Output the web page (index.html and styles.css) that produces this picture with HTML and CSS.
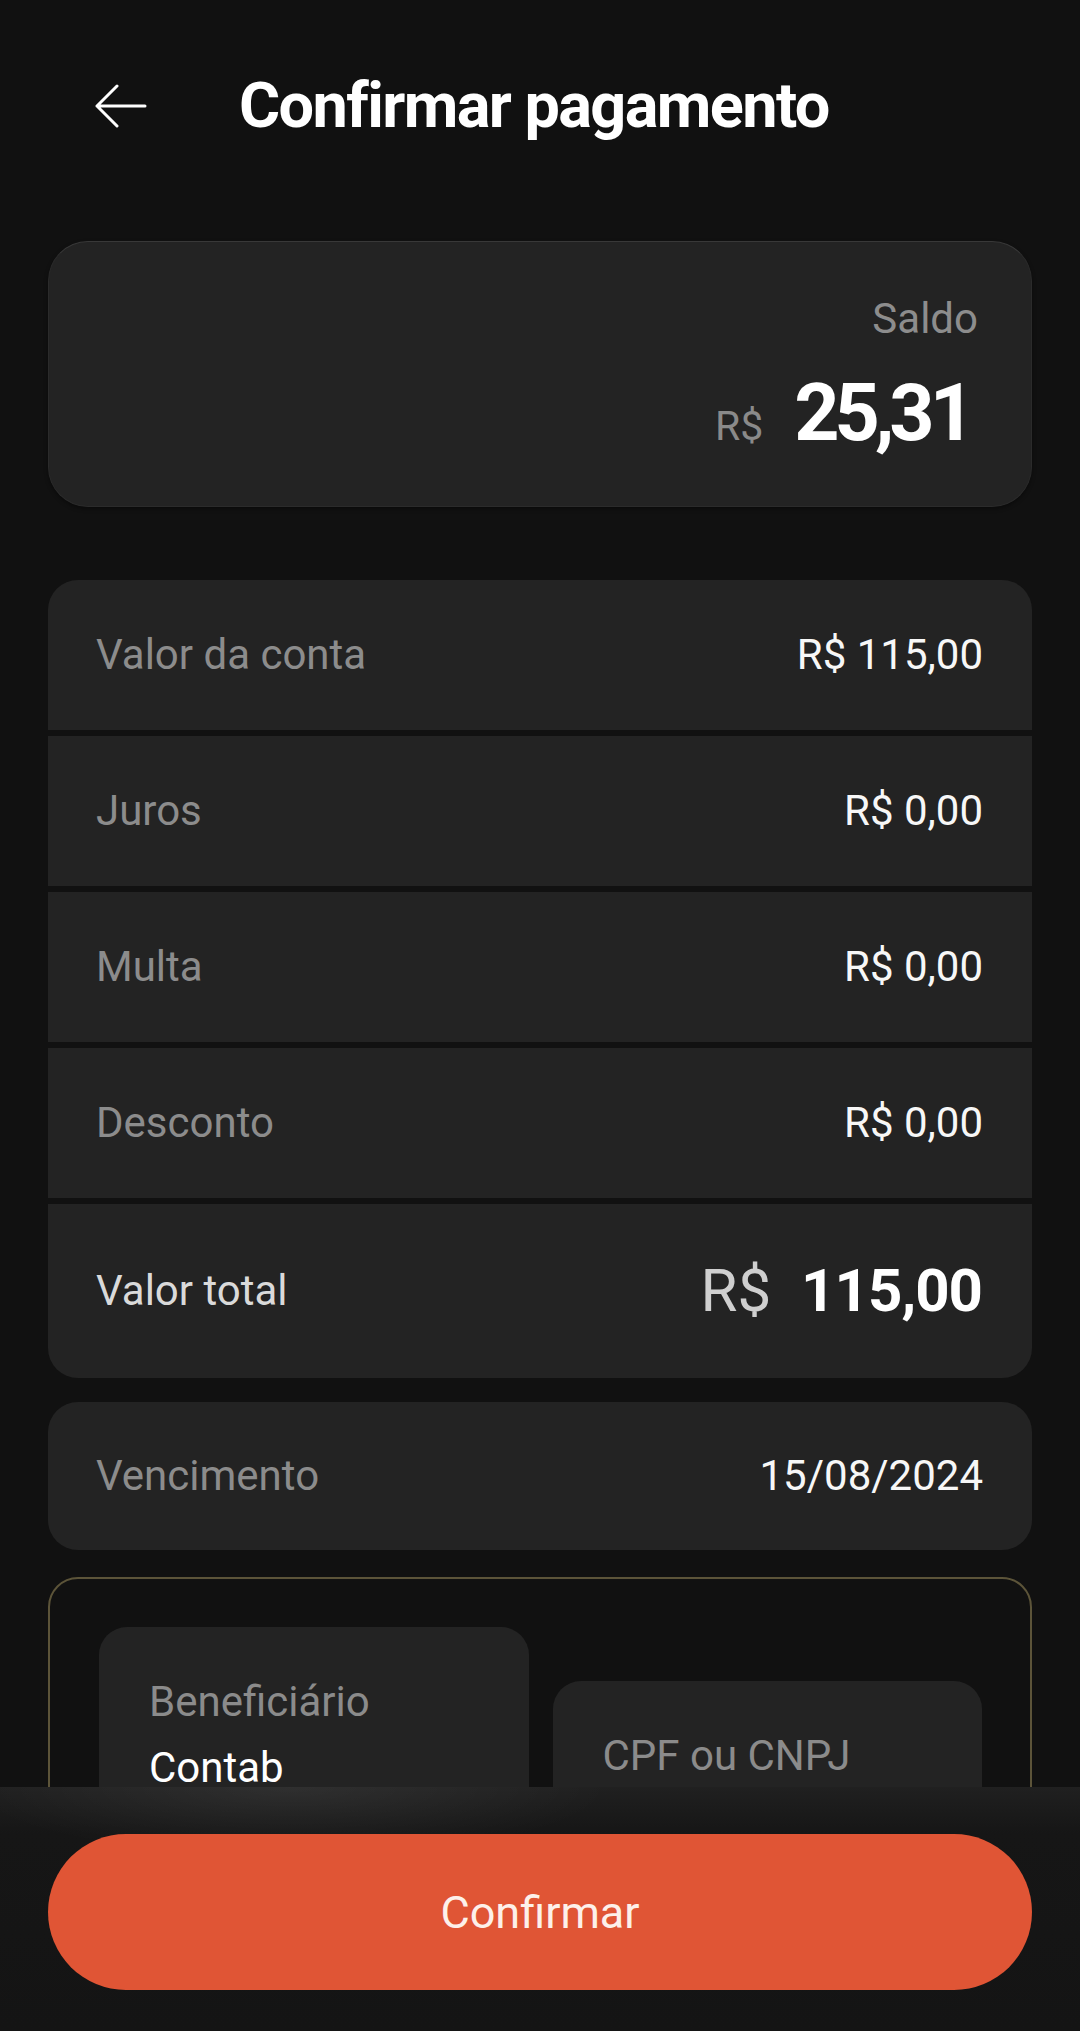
FILE: index.html
```html
<!DOCTYPE html>
<html lang="pt-BR">
<head>
    <meta charset="UTF-8">
    <meta name="viewport" content="width=device-width, initial-scale=1.0">
    <title>Confirmar pagamento</title>
    <link rel="stylesheet" href="styles.css">
</head>
<body>
    <header class="top-bar">
        <button class="back-button" aria-label="Voltar">
            <svg width="52" height="44" viewBox="0 0 52 44" fill="none" stroke="#ffffff" stroke-width="3" stroke-linecap="round" stroke-linejoin="round">
                <path d="M2 22H50M22 2L2 22l20 20"/>
            </svg>
        </button>
        <h1>Confirmar pagamento</h1>
    </header>

    <main class="content">
        <section class="balance-card">
            <div class="balance-label">Saldo</div>
            <div class="balance-amount">
                <span class="currency">R$</span>
                <span class="amount">25,31</span>
            </div>
        </section>

        <section class="summary">
            <div class="summary-row">
                <span class="row-label">Valor da conta</span>
                <span class="row-value">R$ 115,00</span>
            </div>
            <div class="summary-row">
                <span class="row-label">Juros</span>
                <span class="row-value">R$ 0,00</span>
            </div>
            <div class="summary-row">
                <span class="row-label">Multa</span>
                <span class="row-value">R$ 0,00</span>
            </div>
            <div class="summary-row">
                <span class="row-label">Desconto</span>
                <span class="row-value">R$ 0,00</span>
            </div>
            <div class="summary-row total-row">
                <span class="total-label">Valor total</span>
                <span class="total-value">
                    <span class="total-currency">R$</span>
                    <span class="total-amount">115,00</span>
                </span>
            </div>
        </section>

        <section class="due-card">
            <span class="row-label">Vencimento</span>
            <span class="row-value">15/08/2024</span>
        </section>

        <!-- the rest of this box sits under the action bar -->
        <section class="payee-box">
            <div class="info-card">
                <div class="info-label">Beneficiário</div>
                <div class="info-value">Contab</div>
            </div>
            <div class="info-card info-card-short">
                <div class="info-label">CPF ou CNPJ</div>
            </div>
        </section>
    </main>

    <footer class="action-bar">
        <button class="confirm-button">Confirmar</button>
    </footer>
</body>
</html>
```

FILE: styles.css
```css
html, body {
    height: 100%;
}
body {
    margin: 0;
    display: flex;
    flex-direction: column;
    background: #111111;
    color: #ffffff;
    font-family: Roboto, "Liberation Sans", Arial, sans-serif;
    overflow: hidden;
}
.top-bar {
    flex-shrink: 0;
    height: 212px;
    display: flex;
    align-items: center;
    padding-left: 95px;
    box-sizing: border-box;
}
.back-button {
    padding: 0;
    border: none;
    background: none;
    display: flex;
    cursor: pointer;
}
.top-bar h1 {
    margin: 0 0 0 92px;
    font-size: 63px;
    font-weight: 700;
    line-height: 76px;
    letter-spacing: -1.6px;
}
.content {
    flex: 1;
    min-height: 0;
    overflow: hidden;
    padding: 29px 48px 0;
}
.balance-card {
    padding: 52px 53px 45px;
    border: 1px solid #2b2b2b;
    border-top-color: #383838;
    border-radius: 40px;
    background: #232323;
    text-align: right;
    box-shadow: 0 2px 4px rgba(0, 0, 0, 0.4);
}
.balance-label {
    font-size: 42px;
    line-height: 50px;
    color: #8d8d8d;
}
.balance-amount {
    margin-top: 22px;
    display: flex;
    justify-content: flex-end;
    align-items: baseline;
    gap: 31px;
}
.currency {
    font-size: 41px;
    line-height: 49px;
    color: #8a8a8a;
}
.amount {
    font-size: 79px;
    font-weight: 700;
    line-height: 95px;
    letter-spacing: -5px;
    margin-right: 8px;
}
.summary {
    margin-top: 73px;
    display: flex;
    flex-direction: column;
    gap: 6px;
    border-radius: 30px;
    overflow: hidden;
}
.summary-row,
.due-card {
    height: 150px;
    padding: 0 49px 0 48px;
    display: flex;
    justify-content: space-between;
    align-items: center;
    background: #232323;
    font-size: 42px;
    line-height: 50px;
}
.row-label {
    color: #8c8c8c;
}
.row-value {
    color: #f7f7f7;
}
.total-row {
    height: 174px;
}
.total-label {
    color: #dadada;
}
.total-value {
    display: flex;
    align-items: baseline;
    gap: 30px;
}
.total-currency {
    font-size: 60px;
    line-height: 70px;
    color: #cfcfcf;
}
.total-amount {
    font-size: 60px;
    font-weight: 700;
    line-height: 70px;
    letter-spacing: -1px;
    margin-right: 1px;
}
.due-card {
    margin-top: 24px;
    height: 148px;
    border-radius: 30px;
}
.payee-box {
    margin-top: 27px;
    padding: 48px 48px 48px 49px;
    border: 2px solid #5c5439;
    border-radius: 30px;
    display: flex;
    align-items: flex-start;
    gap: 24px;
}
.info-card {
    flex: 1 1 0;
    min-width: 0;
    min-height: 200px;
    padding: 50px;
    border-radius: 28px;
    background: #232323;
    font-size: 42px;
    line-height: 50px;
}
.info-card-short {
    margin-top: 54px;
}
.info-label {
    color: #8b8b8b;
}
.info-value {
    margin-top: 16px;
    color: #ffffff;
}
.action-bar {
    flex-shrink: 0;
    height: 244px;
    padding: 47px 48px 0;
    box-sizing: border-box;
    background:
        radial-gradient(ellipse 320px 70px at 290px 0, rgba(255, 255, 255, 0.07), transparent),
        linear-gradient(#202020, #161616 46px, #141414);
}
.confirm-button {
    width: 100%;
    height: 156px;
    border: none;
    border-radius: 78px;
    background: #e05535;
    color: #fdf0ea;
    font-family: Roboto, "Liberation Sans", Arial, sans-serif;
    font-size: 45px;
    cursor: pointer;
}
```
